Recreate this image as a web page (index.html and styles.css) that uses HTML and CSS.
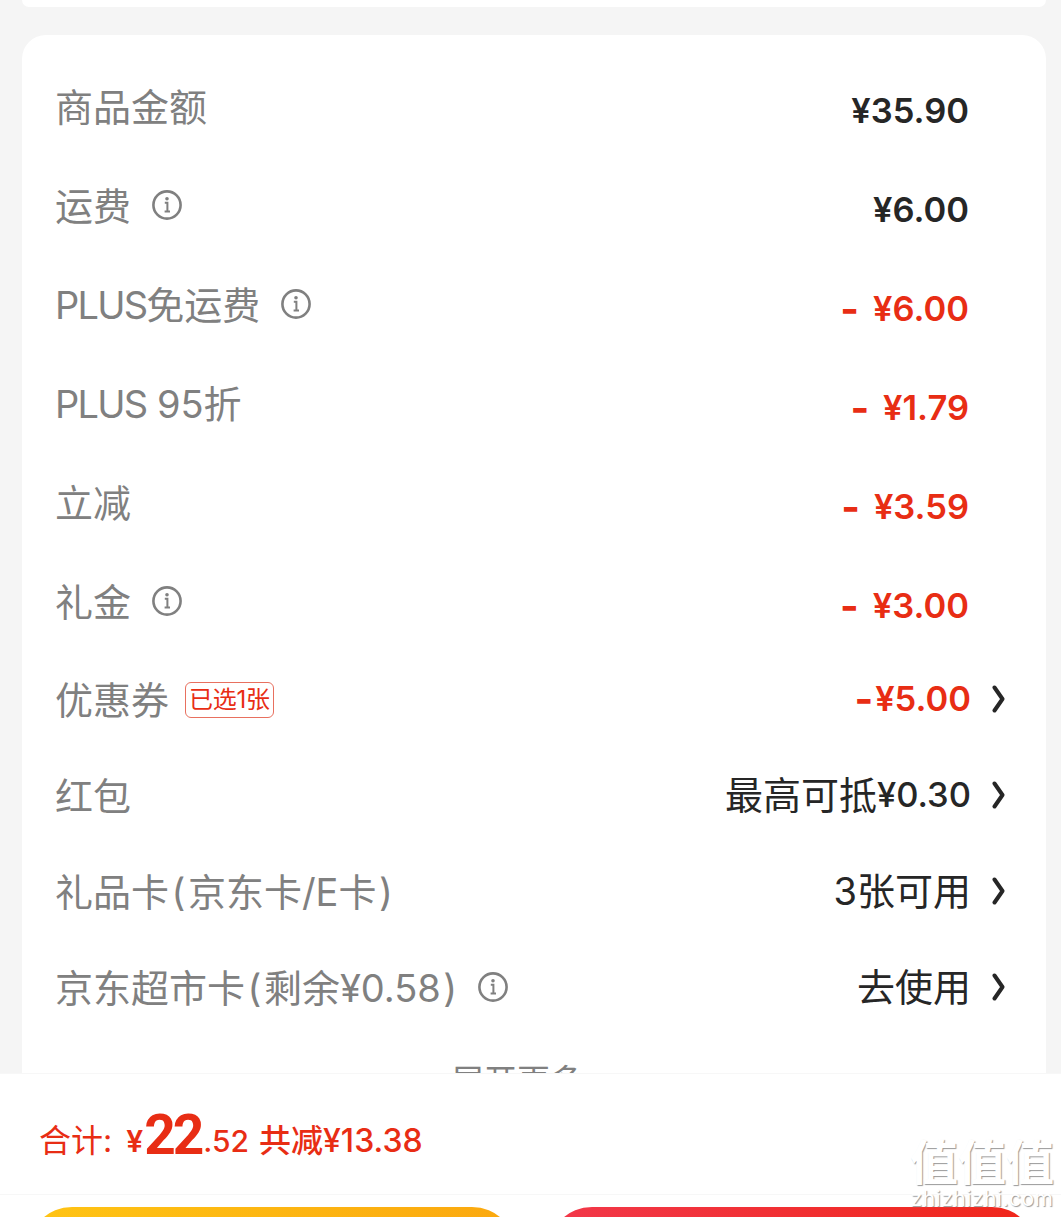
FILE: index.html
```html
<!DOCTYPE html>
<html lang="zh-CN">
<head>
    <meta charset="UTF-8">
    <meta name="viewport" content="width=device-width, initial-scale=1.0">
    <title>订单结算</title>
    <link rel="stylesheet" href="styles.css">
</head>
<body>
    <svg class="icon-defs" width="0" height="0">
        <symbol id="info" viewBox="0 0 30 30">
            <circle cx="15" cy="15" r="13.6" fill="none" stroke="currentColor" stroke-width="2.6"/>
            <circle cx="15" cy="8.8" r="1.8" fill="currentColor"/>
            <path d="M12.8 12.8h2.6v8.4M12.6 21.4h5.4" fill="none" stroke="currentColor" stroke-width="2"/>
        </symbol>
        <symbol id="arrow" viewBox="0 0 14 28">
            <path d="M3.5 2.5 11.5 14 3.5 25.5" fill="none" stroke="currentColor" stroke-width="4" stroke-linecap="round" stroke-linejoin="round"/>
        </symbol>
    </svg>

    <div class="page">
        <div class="scroll">
            <div class="card card-prev"></div>
            <div class="card">
                <div class="row">
                    <span class="label">商品金额</span>
                    <span class="value">¥35.90</span>
                </div>
                <div class="row">
                    <span class="label">运费<svg class="info"><use href="#info"/></svg></span>
                    <span class="value">¥6.00</span>
                </div>
                <div class="row">
                    <span class="label"><span class="plus">PLUS</span>免运费<svg class="info"><use href="#info"/></svg></span>
                    <span class="value red"><span class="minus">-</span>¥6.00</span>
                </div>
                <div class="row">
                    <span class="label"><span class="plus">PLUS</span>&nbsp;95折</span>
                    <span class="value red"><span class="minus">-</span>¥1.79</span>
                </div>
                <div class="row">
                    <span class="label">立减</span>
                    <span class="value red"><span class="minus">-</span>¥3.59</span>
                </div>
                <div class="row">
                    <span class="label">礼金<svg class="info"><use href="#info"/></svg></span>
                    <span class="value red"><span class="minus">-</span>¥3.00</span>
                </div>
                <div class="row row-link">
                    <span class="label">优惠券<span class="tag">已选1张</span></span>
                    <span class="value red"><span class="minus minus-tight">-</span><span class="num">¥5.00</span><svg class="arrow"><use href="#arrow"/></svg></span>
                </div>
                <div class="row row-link">
                    <span class="label">红包</span>
                    <span class="value">最高可抵<span class="num">¥0.30</span><svg class="arrow"><use href="#arrow"/></svg></span>
                </div>
                <div class="row row-link">
                    <span class="label">礼品卡<span class="paren">(</span>京东卡/E卡<span class="paren">)</span></span>
                    <span class="value">3张可用<svg class="arrow"><use href="#arrow"/></svg></span>
                </div>
                <div class="row row-link">
                    <span class="label">京东超市卡<span class="paren">(</span>剩余¥0.58<span class="paren">)</span><svg class="info"><use href="#info"/></svg></span>
                    <span class="value">去使用<svg class="arrow"><use href="#arrow"/></svg></span>
                </div>
                <div class="more">展开更多</div>
            </div>
        </div>

        <div class="total">
            <span class="total-label">合计:</span>
            <span class="total-yen">¥</span><span class="total-big">22</span><span class="total-small">.52</span>
            <span class="total-cut">共减¥13.38</span>
        </div>

        <div class="actions">
            <div class="btn btn-yellow"></div>
            <div class="btn btn-red"></div>
        </div>
    </div>

    <div class="watermark">
        <div class="wm-logo">值值值</div>
        <div class="wm-url">zhizhizhi.com</div>
    </div>
</body>
</html>
```

FILE: styles.css
```css
html, body {
    margin: 0;
    padding: 0;
}
body {
    font-family: Inter, "Noto Sans CJK SC", sans-serif;
    background-color: #f5f5f5;
    color: #262626;
    width: 1061px;
    height: 1217px;
    overflow: hidden;
    position: relative;
}
.icon-defs {
    position: absolute;
}
.page {
    display: flex;
    flex-direction: column;
    height: 1217px;
}
.scroll {
    height: 1073px;
    overflow: hidden;
    flex: none;
}
.card {
    margin: 0 15px 0 22px;
    padding: 24px 0 0 34px;
    background: white;
    border-radius: 24px;
}
.card-prev {
    height: 7px;
    padding: 0;
    margin-bottom: 28px;
    border-radius: 0 0 24px 24px;
}
.row {
    height: 99px;
    display: flex;
    justify-content: space-between;
    align-items: center;
    padding-right: 77px;
}
.row-link {
    height: 96px;
    padding-right: 41px;
}
.label {
    display: flex;
    align-items: center;
    font-size: 38px;
    color: #808080;
    line-height: 50px;
    margin-top: -3px;
    margin-left: -1px;
}
.plus {
    letter-spacing: -1.8px;
}
.paren {
    margin: 0 2.5px;
}
.value {
    display: flex;
    align-items: center;
    font-size: 34.5px;
    font-weight: 600;
    line-height: 50px;
    margin-top: 5px;
}
.row-link .value {
    font-size: 38px;
    font-weight: 400;
    margin-top: -4px;
}
.num {
    font-size: 34.5px;
    font-weight: 500;
}
.red {
    color: #e82d14;
}
.red .num {
    font-weight: 600;
}
.minus {
    font-size: 40px;
    font-weight: 700;
    margin-right: 14px;
}
.minus-tight {
    margin-right: 2px;
}
.info {
    width: 30px;
    height: 30px;
    margin-left: 21px;
    margin-top: -2px;
    color: #808080;
}
.paren + .info {
    margin-left: 18px;
}
.arrow {
    width: 14px;
    height: 28px;
    margin-left: 20px;
    color: #262626;
}
.tag {
    margin-left: 16px;
    padding: 0 3px;
    height: 34px;
    line-height: 34px;
    font-size: 24px;
    color: #e82d14;
    border: 1px solid #e8705f;
    border-radius: 6px;
    letter-spacing: -0.25px;
}
.more {
    margin-top: 19px;
    padding-right: 68px;
    text-align: center;
    font-size: 33px;
    color: #808080;
    line-height: 50px;
}
.total {
    height: 122px;
    flex: none;
    box-sizing: border-box;
    background: white;
    border-top: 1px solid #f7f7f7;
    border-bottom: 1px solid #f7f7f7;
    padding-left: 39px;
    display: flex;
    align-items: baseline;
    padding-top: 24px;
    color: #e82d14;
    font-weight: 500;
    line-height: 70px;
}
.total-label {
    font-size: 32px;
    font-weight: 400;
    margin-right: 14px;
}
.total-yen {
    font-size: 30px;
    font-weight: 600;
}
.total-big {
    font-family: Roboto, sans-serif;
    font-size: 55px;
    font-weight: 700;
    letter-spacing: -3px;
    margin-left: 1px;
    margin-right: 2px;
    transform: translateY(2px);
}
.total-small {
    font-size: 30px;
}
.total-cut {
    font-size: 32px;
    margin-left: 10px;
}
.actions {
    flex: 1;
    background: white;
    display: flex;
    justify-content: space-between;
    padding: 12px 25px 0 28px;
}
.btn {
    height: 60px;
    border-radius: 44px 44px 0 0;
}
.btn-yellow {
    width: 488px;
    background: linear-gradient(90deg, #ffc414, #fba80f);
}
.btn-red {
    width: 488px;
    background: linear-gradient(90deg, #f2384a, #f0261a);
}
.watermark {
    position: absolute;
    right: 6px;
    bottom: 7px;
    width: 146px;
    text-align: center;
    color: #fff;
    text-shadow: 1px 1px 1px #999;
}
.wm-logo {
    font-size: 48px;
    line-height: 50px;
    font-weight: 700;
}
.wm-url {
    font-size: 21px;
    line-height: 22px;
    letter-spacing: 0.5px;
}
```
